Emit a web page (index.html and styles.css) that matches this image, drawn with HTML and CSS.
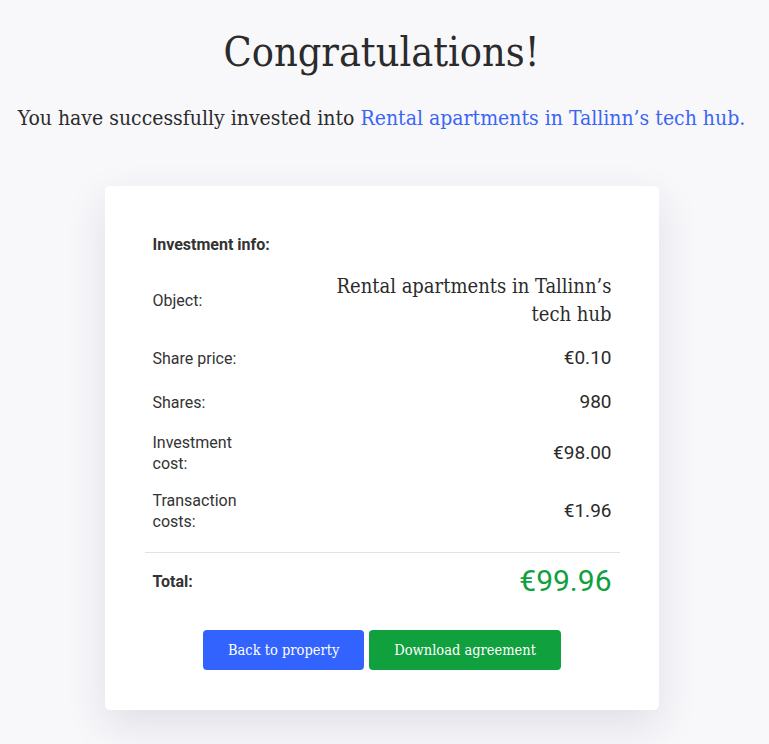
FILE: index.html
```html
<!DOCTYPE html>
<html lang="en">
<head>
  <meta charset="UTF-8" />
  <meta name="viewport" content="width=device-width, initial-scale=1" />
  <title>Investment complete</title>
  <link rel="stylesheet" href="styles.css">
</head>

<body>

  <!-- Header -->
  <header class="intro">
    <h1>Congratulations!</h1>
    <p>You have successfully invested into <a href="#">Rental apartments in Tallinn’s tech hub.</a></p>
  </header>

  <!-- Summary card -->
  <div class="card">
    <div class="info">
      <div class="label strong heading">Investment info:</div>

      <div class="label">Object:</div>
      <div class="value slab">Rental apartments in Tallinn’s tech hub</div>

      <div class="label">Share price:</div>
      <div class="value">€0.10</div>

      <div class="label">Shares:</div>
      <div class="value">980</div>

      <div class="label">Investment cost:</div>
      <div class="value">€98.00</div>

      <div class="label">Transaction costs:</div>
      <div class="value">€1.96</div>
    </div>

    <hr>

    <div class="total">
      <span class="label strong">Total:</span>
      <span class="total-value">€99.96</span>
    </div>

    <div class="actions">
      <a href="#" class="btn btn-blue">Back to property</a>
      <a href="#" class="btn btn-green">Download agreement</a>
    </div>
  </div>

</body>
</html>
```

FILE: styles.css
```css
body {
  margin: 0;
  font-family: Roboto, 'Noto Sans', sans-serif;
  background-color: #f8f8fb;
  color: #2b2b2b;
  padding: 0 6px 40px 0;
}

.intro {
  text-align: center;
  font-family: 'DejaVu Serif Condensed', 'DejaVu Serif', serif;
  font-stretch: condensed;
  padding-top: 26px;
}

.intro h1 {
  margin: 0;
  font-size: 41px;
  font-weight: 400;
  line-height: 52px;
}

.intro p {
  margin: 26px 0 0;
  font-size: 21px;
  line-height: 28px;
}

.intro a {
  color: #3a66f5;
  text-decoration: none;
}

.card {
  width: 459px;
  margin: 54px auto 0;
  padding: 48px 47px 40px 48px;
  background-color: #fff;
  border-radius: 5px;
  box-shadow: 0 15px 40px rgba(40, 40, 70, 0.12);
}

.info {
  display: grid;
  grid-template-columns: 110px 1fr;
  row-gap: 16px;
  align-items: center;
}

.label {
  font-size: 16px;
  line-height: 21px;
  color: #333;
}

.label.strong {
  font-weight: bold;
}

.heading {
  grid-column: 1 / -1;
  margin-bottom: 1px;
}

.value {
  text-align: right;
  font-size: 19px;
  line-height: 28px;
  color: #2b2b2b;
}

.value.slab {
  font-family: 'DejaVu Serif Condensed', 'DejaVu Serif', serif;
  font-stretch: condensed;
  font-size: 20px;
  padding-left: 50px;
}

hr {
  border: none;
  border-top: 1px solid #e2e2e6;
  margin: 20px -8px 10px;
}

.total {
  display: flex;
  justify-content: space-between;
  align-items: center;
}

.total-value {
  font-size: 30px;
  line-height: 36px;
  color: #10a03f;
}

.actions {
  display: flex;
  justify-content: center;
  gap: 5px;
  margin-top: 31px;
}

.btn {
  display: inline-block;
  height: 40px;
  line-height: 40px;
  padding: 0 25px;
  border-radius: 4px;
  color: #fff;
  text-decoration: none;
  font-family: 'DejaVu Serif Condensed', 'DejaVu Serif', serif;
  font-stretch: condensed;
  font-size: 14.5px;
}

.btn-blue {
  background-color: #3363ff;
}

.btn-green {
  background-color: #10a13e;
}
```
